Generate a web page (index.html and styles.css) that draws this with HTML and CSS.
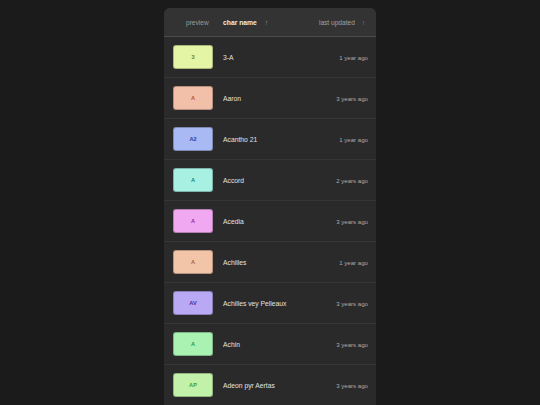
FILE: index.html
```html
<!DOCTYPE html>
<html>
<head>
<meta charset="utf-8">
<link rel="stylesheet" href="styles.css">
</head>
<body>
<div class="card">
  <div class="head">
    <div class="h-preview">preview</div>
    <div class="h-name">char name <span class="arrow">↑</span></div>
    <div class="h-date">last updated <span class="arrow">↑</span></div>
  </div>
  <div class="row"><div class="box c1">3</div><div class="name">3-A</div><div class="date">1 year ago</div></div>
  <div class="row"><div class="box c2">A</div><div class="name">Aaron</div><div class="date">3 years ago</div></div>
  <div class="row"><div class="box c3">A2</div><div class="name">Acantho 21</div><div class="date">1 year ago</div></div>
  <div class="row"><div class="box c4">A</div><div class="name">Accord</div><div class="date">2 years ago</div></div>
  <div class="row"><div class="box c5">A</div><div class="name">Acedia</div><div class="date">3 years ago</div></div>
  <div class="row"><div class="box c6">A</div><div class="name">Achilles</div><div class="date">1 year ago</div></div>
  <div class="row"><div class="box c7">AV</div><div class="name">Achilles vey Pelleaux</div><div class="date">3 years ago</div></div>
  <div class="row"><div class="box c8">A</div><div class="name">Achin</div><div class="date">3 years ago</div></div>
  <div class="row"><div class="box c9">AP</div><div class="name">Adeon pyr Aertas</div><div class="date">3 years ago</div></div>
</div>
</body>
</html>
```
FILE: styles.css
```css
html, body {
  margin: 0;
  padding: 0;
  background: #1b1b1b;
  height: 405px;
  overflow: hidden;
  font-family: "Liberation Sans", Arial, sans-serif;
}
body {
  display: flex;
  justify-content: center;
  padding-top: 8px;
  box-sizing: border-box;
}
.card {
  width: 212px;
  background: #2a2a2a;
  border-radius: 6px 6px 0 0;
  overflow: hidden;
  flex: none;
  min-height: 397px;
}
.head {
  height: 28px;
  background: #333333;
  border-bottom: 1px solid #4c4c4c;
  display: flex;
  align-items: center;
  padding: 0 9px 0 9px;
  font-size: 6.6px;
  color: #9c9c9c;
}
.h-preview {
  width: 40px;
  padding-left: 13px;
  box-sizing: border-box;
  white-space: nowrap;
  margin-right: 10px;
}
.h-name {
  font-weight: bold;
  color: #ededed;
  font-size: 6.75px;
  flex: 1;
}
.h-name .arrow {
  font-weight: normal;
  color: #9c9c9c;
  margin-left: 6px;
}
.h-date {
  color: #a0a0a0;
  margin-right: 2px;
}
.h-date .arrow {
  margin-left: 5px;
}
.row {
  height: 40px;
  border-bottom: 1px solid #363636;
  display: flex;
  align-items: center;
  padding: 0 8px 0 9px;
}
.box {
  width: 40px;
  height: 24px;
  box-sizing: border-box;
  border-radius: 3px;
  border: 1px solid rgba(0,0,0,0.25);
  display: flex;
  align-items: center;
  justify-content: center;
  font-size: 5.6px;
  font-weight: bold;
  margin-right: 10px;
  flex: none;
}
.name {
  flex: 1;
  font-size: 6.75px;
  color: #e2e2e2;
}
.date {
  font-size: 6.1px;
  color: #acacac;
}
.c1 { background: #e5f5a6; color: #6e7d25; }
.c2 { background: #f2c0a8; color: #c0502c; }
.c3 { background: #a9b9f3; color: #2c3ca2; }
.c4 { background: #a8f0e2; color: #1c8a70; }
.c5 { background: #f0a9f0; color: #9a2c9a; }
.c6 { background: #f2c5a8; color: #b0602c; }
.c7 { background: #b9a9f5; color: #4a2ca2; }
.c8 { background: #a9f2b2; color: #2c9a3c; }
.c9 { background: #c2f2a9; color: #4c9a2c; }
```
